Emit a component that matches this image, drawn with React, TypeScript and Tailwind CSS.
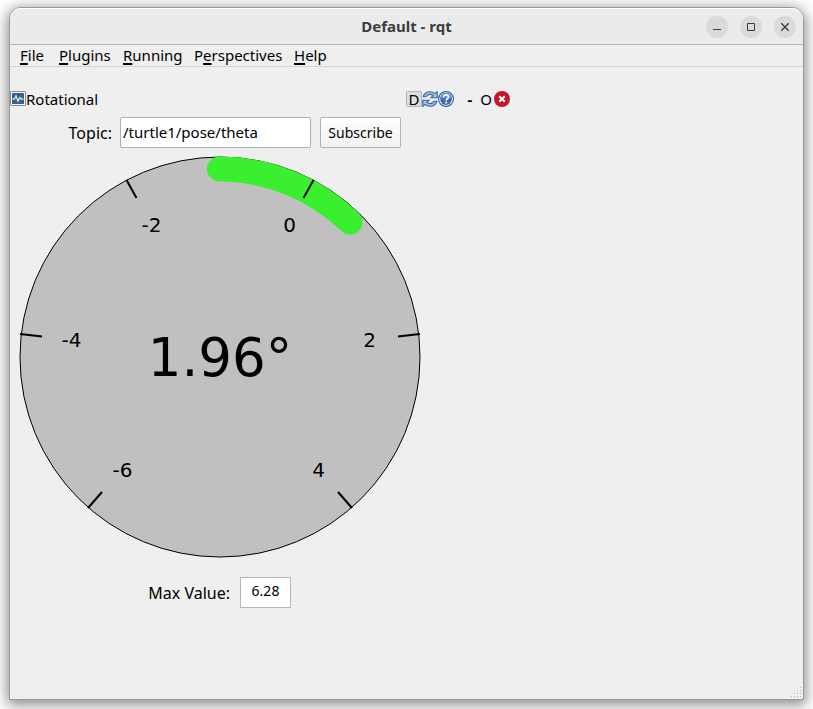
import React, { useState } from 'react';

const menus = [
  { before: '', key: 'F', after: 'ile', width: 'w-6' },
  { before: '', key: 'P', after: 'lugins', width: 'w-[49px]' },
  { before: '', key: 'R', after: 'unning', width: 'w-14' },
  { before: 'P', key: 'e', after: 'rspectives', width: 'w-[85px]' },
  { before: '', key: 'H', after: 'elp', width: 'w-8' },
];

const ticks = [
  { label: '-2', x1: 106.5, y1: 23, x2: 116.5, y2: 41, tx: 131.5, ty: 75 },
  { label: '0', x1: 293.5, y1: 23, x2: 283.5, y2: 41, tx: 269.5, ty: 75 },
  { label: '2', x1: 400, y1: 177, x2: 378, y2: 179.5, tx: 349.5, ty: 190 },
  { label: '4', x1: 332, y1: 351, x2: 318, y2: 335, tx: 298.5, ty: 320 },
  { label: '-6', x1: 68, y1: 351, x2: 82, y2: 335, tx: 102.5, ty: 320 },
  { label: '-4', x1: 0, y1: 177, x2: 22, y2: 179.5, tx: 51.5, ty: 190 },
];

const TitleBar = () => (
  <header className="grid h-9 grid-cols-[1fr_auto_1fr] items-center rounded-t-[11px] border-t border-white bg-[#ebebeb]">
    <h1 className="col-start-2 text-[15px] font-bold text-[#3d3d3d]">Default - rqt</h1>
    <div className="flex justify-end gap-3 pr-[7px]">
      <button aria-label="Minimize" className="flex size-[22px] items-center justify-center rounded-full bg-[#dadada]">
        <svg width="22" height="22" viewBox="0 0 22 22">
          <path d="M7 13.5h8" stroke="#3d3d3d" />
        </svg>
      </button>
      <button aria-label="Maximize" className="flex size-[22px] items-center justify-center rounded-full bg-[#dadada]">
        <svg width="22" height="22" viewBox="0 0 22 22">
          <path d="M7.5 7.5h7v7h-7z" fill="none" stroke="#3d3d3d" />
        </svg>
      </button>
      <button aria-label="Close" className="flex size-[22px] items-center justify-center rounded-full bg-[#dadada]">
        <svg width="22" height="22" viewBox="0 0 22 22">
          <path d="M7.3 7.3l7.4 7.4M14.7 7.3l-7.4 7.4" stroke="#3d3d3d" strokeWidth="1.4" />
        </svg>
      </button>
    </div>
  </header>
);

const PluginIcon = () => (
  <svg width="16" height="16" viewBox="0 0 16 16">
    <rect x="0.5" y="0.5" width="15" height="14" rx="0.6" fill="#f4f4f2" stroke="#888a85" />
    <rect x="2" y="2" width="12" height="11" rx="0.6" fill="#2f629e" />
    <path d="M2.5 8h2l1.5-3 2 5 2-3.4L11.2 8h2.3" fill="none" stroke="#d0e2bd" strokeWidth="1.5" />
  </svg>
);

const RefreshIcon = () => (
  <svg width="16" height="16" viewBox="0 0 16 16">
    <path
      d="M1.2 5.8C2 2.4 4.8.7 8 .7c2.1 0 3.7.7 4.9 1.9l2.3-2v6.2H9l2.1-2.2C9 3 6 3 3.7 5.8z"
      fill="#a3c3e8"
      stroke="#3465a4"
      strokeWidth="1.1"
    />
    <path
      d="M14.8 10.2c-.8 3.4-3.6 5.1-6.8 5.1-2.1 0-3.7-.7-4.9-1.9l-2.3 2V9.2H7l-2.1 2.2c2.1 1.6 5.1 1.6 7.4-1.2z"
      fill="#a3c3e8"
      stroke="#3465a4"
      strokeWidth="1.1"
    />
  </svg>
);

const HelpIcon = () => (
  <svg width="16" height="16" viewBox="0 0 16 16">
    <circle cx="8" cy="8" r="7.4" fill="#ffffff" stroke="#3465a4" strokeWidth="1.2" />
    <circle cx="8" cy="8" r="5.9" fill="#396dab" />
    <path d="M2.2 7.5a5.8 5.8 0 0 1 11.6 0C10 6.5 6 7 2.2 7.5z" fill="#5f8cc2" />
    <path d="M5.6 6.2C5.6 4.4 6.6 3.8 8 3.8s2.5.7 2.5 2.1c0 1.6-2.3 1.8-2.3 3.5" fill="none" stroke="#ffffff" strokeWidth="1.7" />
    <rect x="7.3" y="10.6" width="1.8" height="1.8" fill="#ffffff" />
  </svg>
);

const CloseIcon = () => (
  <svg width="16" height="16" viewBox="0 0 16 16">
    <circle cx="8" cy="8" r="8" fill="#c7162b" />
    <path d="M5.2 5.2l5.6 5.6M10.8 5.2l-5.6 5.6" stroke="#ffffff" strokeWidth="2" />
  </svg>
);

const DockBar = () => (
  <div className="flex h-4 items-center text-[15px]">
    <PluginIcon />
    <h2>Rotational</h2>
    <div className="ml-auto flex items-center">
      <button className="flex size-4 items-center justify-center rounded-xs border border-[#b4b4b4] bg-[#dedede]">D</button>
      <button aria-label="Reload" className="size-4"><RefreshIcon /></button>
      <button aria-label="Help" className="size-4"><HelpIcon /></button>
      <button className="ml-2 flex size-4 items-center justify-center font-bold">-</button>
      <button className="flex size-4 items-center justify-center">O</button>
      <button aria-label="Close plugin" className="size-4"><CloseIcon /></button>
    </div>
  </div>
);

const Gauge = () => (
  <svg width="402" height="402" viewBox="-1 -1 402 402" className="block" fontFamily="DejaVu Sans, sans-serif">
    <circle cx="200" cy="200" r="200" fill="#c0c0c0" stroke="#000000" />
    <path d="M199.5 12A188 188 0 0 1 330 65" fill="none" stroke="#3aef30" strokeWidth="25" strokeLinecap="round" />
    {ticks.map((tick) => (
      <g key={tick.label}>
        <line x1={tick.x1} y1={tick.y1} x2={tick.x2} y2={tick.y2} stroke="#000000" strokeWidth="2" />
        <text x={tick.tx} y={tick.ty} fontSize="20" textAnchor="middle">{tick.label}</text>
      </g>
    ))}
    <text x="200" y="219" fontSize="53" textAnchor="middle">1.96°</text>
  </svg>
);

const SizeGrip = () => (
  <svg width="12" height="12" viewBox="0 0 12 12" className="absolute right-px bottom-px" fill="#b5b5b5">
    <path d="M10 1h1v1h-1zM7 4h1v1h-1zM10 4h1v1h-1zM4 7h1v1h-1zM7 7h1v1h-1zM10 7h1v1h-1zM1 10h1v1h-1zM4 10h1v1h-1zM7 10h1v1h-1zM10 10h1v1h-1z" />
  </svg>
);

const App = () => {
  const [topic, setTopic] = useState('/turtle1/pose/theta');
  const [maxValue, setMaxValue] = useState('6.28');

  return (
    <div className="flex min-h-screen flex-col bg-white px-[9px] pt-[7px] pb-[9px] font-['Noto_Sans','Open_Sans',sans-serif] text-black">
      <div className="relative flex flex-1 flex-col rounded-t-xl border border-[#999999] bg-[#efefef] shadow-[0_3px_14px_2px_rgba(0,0,0,0.45)]">
        <TitleBar />

        <nav className="flex h-[23px] items-center gap-[15px] border-y border-t-[#b8b8b8] border-b-[#d3d3d3] px-[10px] text-[15px]">
          {menus.map((menu) => (
            <button key={menu.key} className={`${menu.width} text-left whitespace-nowrap`}>
              {menu.before}
              <span className="underline decoration-2 underline-offset-2">{menu.key}</span>
              {menu.after}
            </button>
          ))}
        </nav>

        <main className="w-[500px] max-w-full pt-6">
          <DockBar />

          {/* Topic picker */}
          <form className="mt-[10px] flex h-[31px] items-center" onSubmit={(e) => e.preventDefault()}>
            <label htmlFor="topic" className="mr-2 w-[102px] text-right text-base">Topic:</label>
            <input
              id="topic"
              value={topic}
              onChange={(e) => setTopic(e.target.value)}
              className="h-full w-[191px] rounded-xs border border-[#b0b0b0] bg-white px-0.5 pb-0.5 text-[15px] outline-none"
            />
            <button className="ml-[9px] h-full w-[81px] rounded-xs border border-[#b0b0b0] bg-gradient-to-b from-white to-[#f1f1f1] text-sm">
              Subscribe
            </button>
          </form>

          <div className="mt-2 pl-[9px]">
            <Gauge />
          </div>

          {/* Upper bound of the dial */}
          <div className="mt-[19px] flex h-[31px] items-center">
            <label htmlFor="max-value" className="mr-[10px] w-[220px] text-right text-base">Max Value:</label>
            <input
              id="max-value"
              value={maxValue}
              onChange={(e) => setMaxValue(e.target.value)}
              className="h-full w-[51px] border border-[#b5b5b5] bg-white pb-1 text-center text-sm outline-none"
            />
          </div>
        </main>

        <SizeGrip />
      </div>
    </div>
  );
};

export default App;
